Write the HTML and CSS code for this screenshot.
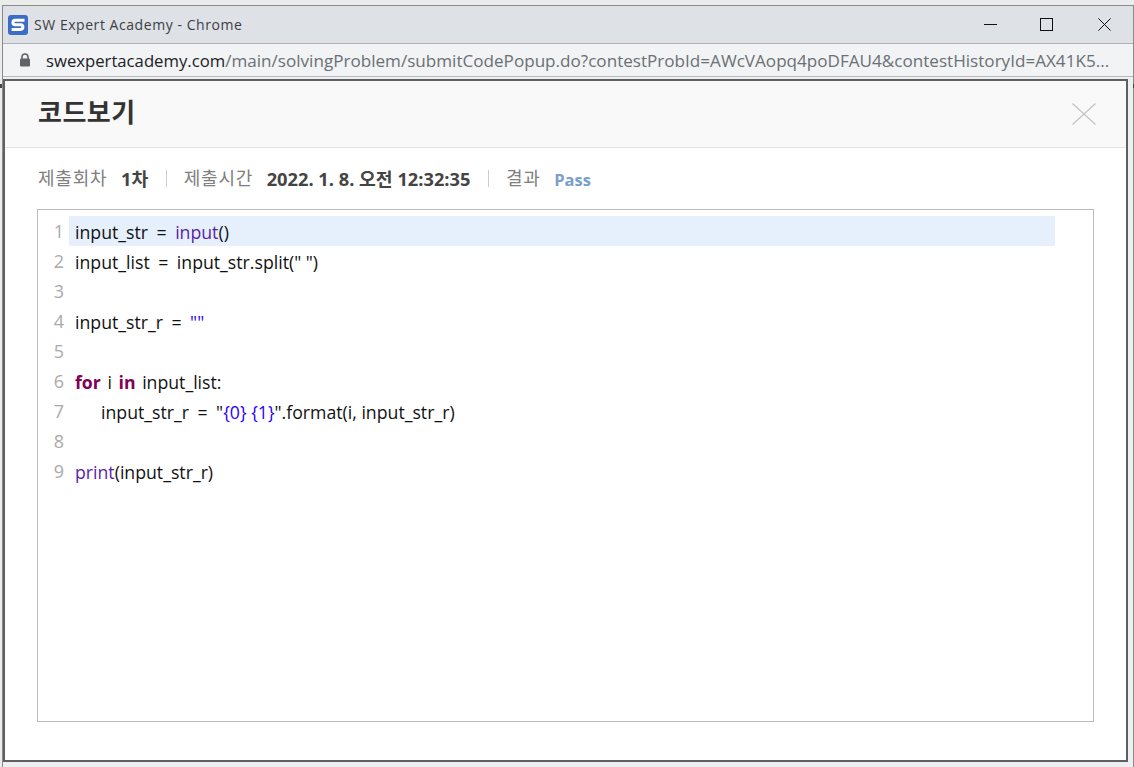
FILE: index.html
```html
<!DOCTYPE html>
<html lang="ko">
<head>
<meta charset="utf-8">
<title>SW Expert Academy - Chrome</title>
<link rel="stylesheet" href="styles.css">
</head>
<body>
<div class="window">
  <header class="titlebar">
    <svg class="favicon" width="20" height="20" viewBox="0 0 20 20"><rect width="20" height="20" rx="3" fill="#3b6dc6"/><path d="M16.5 5.2H7.2a2.3 2.3 0 0 0 0 4.6h5.4a2.3 2.3 0 0 1 0 4.6H3.6" fill="none" stroke="#fff" stroke-width="3"/></svg>
    <span class="title">SW Expert Academy - Chrome</span>
    <div class="controls">
      <svg width="13" height="13" viewBox="0 0 13 13"><path d="M0 6.5H13" stroke="#111" fill="none"/></svg>
      <svg width="13" height="13" viewBox="0 0 13 13"><rect x=".5" y=".5" width="12" height="12" stroke="#111" fill="none"/></svg>
      <svg class="win-close" width="13" height="13" viewBox="0 0 13 13"><path d="M.4.4 12.6 12.6M12.6.4.4 12.6" stroke="#111" fill="none"/></svg>
    </div>
  </header>
  <div class="addressbar">
    <svg class="lock" width="12" height="14" viewBox="0 0 12 14"><path d="M3 6V4a3 3 0 0 1 6 0v2" fill="none" stroke="#5f6368" stroke-width="1.6"/><rect x="1" y="5.5" width="10" height="8" rx="1.2" fill="#5f6368"/></svg>
    <span class="url"><span class="host">swexpertacademy.com</span>/main/solvingProblem/submitCodePopup.do?contestProbId=AWcVAopq4poDFAU4&amp;contestHistoryId=AX41K5...</span>
  </div>
  <main class="popup">
    <div class="popup-head">
      <h1>코드보기</h1>
      <svg class="close" width="24" height="22" viewBox="0 0 24 22"><path d="M.5.5 23.5 21.5M23.5.5.5 21.5" stroke="#c4c4c4" stroke-width="1.2" fill="none"/></svg>
    </div>
    <div class="popup-body">
      <dl class="meta">
        <dt>제출회차</dt><dd>1차</dd><i class="sep"></i>
        <dt>제출시간</dt><dd>2022. 1. 8. 오전 12:32:35</dd><i class="sep"></i>
        <dt>결과</dt><dd class="pass">Pass</dd>
      </dl>
      <div class="code">
        <div class="line active"><span class="no">1</span><code>input_str<span class="op">=</span><span class="fn">input</span>()</code></div>
        <div class="line"><span class="no">2</span><code>input_list<span class="op">=</span>input_str.split(" ")</code></div>
        <div class="line"><span class="no">3</span><code></code></div>
        <div class="line"><span class="no">4</span><code>input_str_r<span class="op">=</span><span class="str">""</span></code></div>
        <div class="line"><span class="no">5</span><code></code></div>
        <div class="line"><span class="no">6</span><code class="spaced"><b class="kw">for</b> i <b class="kw">in</b> input_list:</code></div>
        <div class="line"><span class="no">7</span><code class="indent">input_str_r<span class="op">=</span>"<span class="str">{0} {1}</span>".format(i, input_str_r)</code></div>
        <div class="line"><span class="no">8</span><code></code></div>
        <div class="line"><span class="no">9</span><code><span class="fn">print</span>(input_str_r)</code></div>
      </div>
    </div>
  </main>
</div>
</body>
</html>
```
FILE: styles.css
```css
* { box-sizing: border-box; }
html, body { margin: 0; height: 767px; overflow: hidden; background: #ececec; }
body { position: relative; padding: 5px 0 0 2px; font-family: "Open Sans", "Noto Sans CJK KR", sans-serif; }
body::before, body::after { content: ""; position: absolute; top: 84px; height: 4px; background: #444; }
body::before { left: 0; width: 2px; }
body::after { right: 0; width: 1px; }
.window { height: 762px; border: 1px solid #8a8a8a; border-bottom: 0; background: #eeeff1; display: flex; flex-direction: column; }
.titlebar { height: 38px; flex: none; background: #dee1e6; border-bottom: 1px solid #b0b2b5; display: flex; align-items: center; padding-left: 5px; }
.favicon { flex: none; }
.title { margin-left: 6px; font-size: 14px; color: #3c4043; letter-spacing: .55px; }
.controls { margin-left: auto; display: flex; gap: 43px; padding-right: 22px; }
.win-close { margin-left: 2px; }
.addressbar { height: 33px; flex: none; background: #f1f3f4; border-bottom: 1px solid #b8babc; display: flex; align-items: center; padding-left: 16px; }
.url { margin-left: 15px; font-size: 17.1px; color: #6b7075; white-space: nowrap; }
.host { color: #202124; font-size: 16.7px; }
.popup { flex: 1; margin: 2px 5px 5px 0; background: #fff; border: 2px solid #5f5f5f; display: flex; flex-direction: column; }
.popup-head { height: 67px; flex: none; background: #f9f9f9; border-bottom: 1px solid #e3e3e3; display: flex; align-items: center; justify-content: space-between; padding: 0 30px 0 33px; }
h1 { margin: 0 0 8px; font-size: 26px; letter-spacing: .5px; font-weight: 700; color: #333; font-family: "Noto Sans CJK KR", sans-serif; }
.popup-body { padding: 0 32px; }
.meta { margin: 0; height: 61px; padding: 0 0 2px 1px; display: flex; align-items: center; font-size: 18.25px; color: #444; }
.meta dt { color: #808080; font-size: 18px; letter-spacing: .8px; margin-bottom: 2px; font-family: "Noto Sans CJK KR", sans-serif; }
.meta dd { margin: 0 0 0 13.5px; font-weight: 700; }
.sep { width: 1px; height: 17px; background: #ccc; margin: 2px 16.5px 0 18px; }
.meta .pass { color: #7a9fcb; font-size: 16.5px; margin-top: 4px; }
.code { height: 513px; border: 1px solid #bbb; padding-top: 6px; font-size: 18px; color: #111; }
.line { height: 30px; display: flex; align-items: center; }
.no { width: 26px; text-align: right; color: #aaa; flex: none; }
code { font-family: "Open Sans", sans-serif; font-size: 17.7px; flex: 1; height: 30px; line-height: 30px; margin: 0 38px 0 5px; padding: 1px 0 0 6px; white-space: pre; }
.active code { background: #e6f0fc; }
.indent { padding-left: 32px; }
.spaced { word-spacing: 2px; }
.op { margin: 0 8.5px; }
.fn { color: #5a1ea8; }
.str { color: #2a00ff; }
.kw { color: #7f0055; }
```
